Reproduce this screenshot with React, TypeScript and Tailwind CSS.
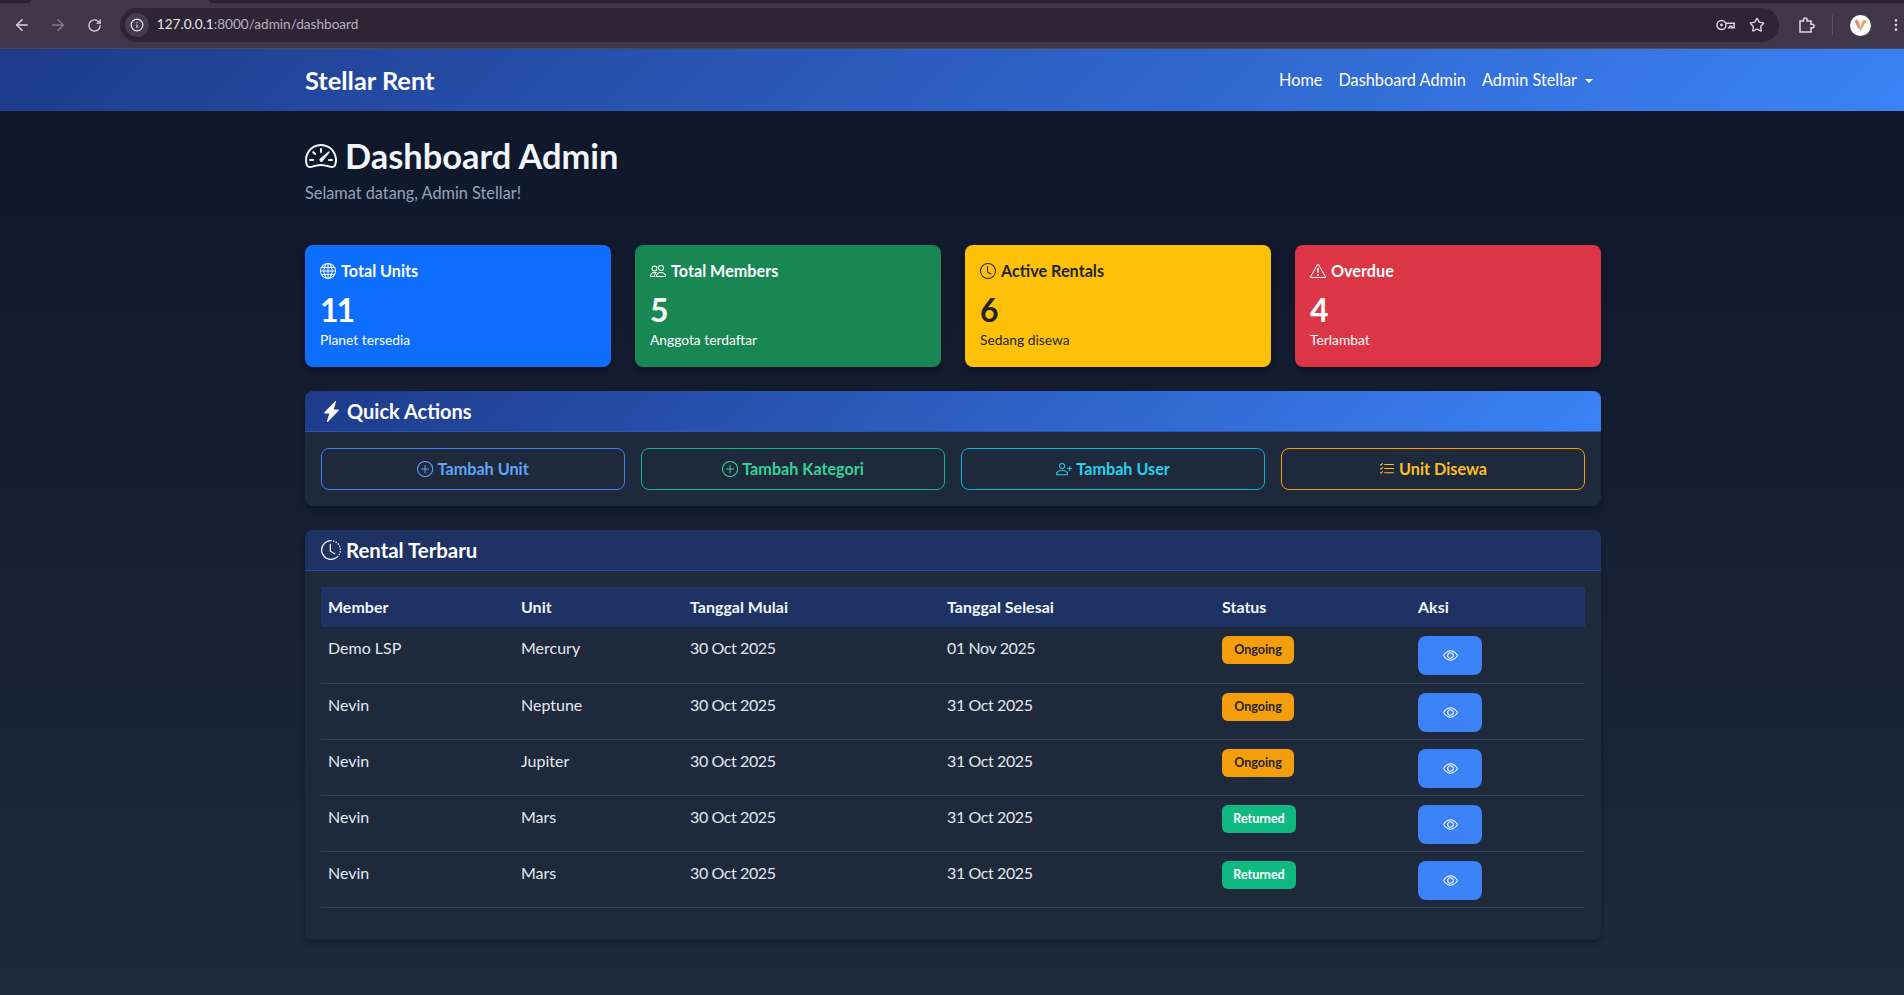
import { ArrowLeft, ArrowRight, RotateCw, Info, Star, EllipsisVertical } from "lucide-react";
import {
  BsSpeedometer2, BsGlobe, BsPeople, BsClock, BsExclamationTriangle, BsLightningChargeFill,
  BsPlusCircle, BsPersonPlus, BsListCheck, BsClockHistory, BsEye,
} from "react-icons/bs";
import type { ReactNode } from "react";

function Stat({ bg, dark, icon, title, value, sub }: { bg: string; dark?: boolean; icon: ReactNode; title: string; value: string; sub: string }) {
  return (
    <div className={`${bg} ${dark ? "text-[#212529]" : "text-white"} h-[122px] rounded-lg px-[15px] pt-[14px] shadow-[0_4px_6px_rgba(0,0,0,0.3)]`}>
      <div className="flex items-center gap-[5px] text-[16.2px] font-bold leading-6">
        <span className="text-base">{icon}</span>
        {title}
      </div>
      <div className="mt-2 text-[32px] font-bold leading-[38px] tracking-[-2px]">{value}</div>
      <div className="mt-[1px] text-[13.8px] leading-5">{sub}</div>
    </div>
  );
}

function QuickBtn({ cls, icon, label }: { cls: string; icon: ReactNode; label: string }) {
  return (
    <button className={`${cls} flex h-[42px] items-center justify-center gap-1 rounded-lg border text-[16.2px] font-bold`}>
      {icon}
      {label}
    </button>
  );
}

const rows = [
  ["Demo LSP", "Mercury", "30 Oct 2025", "01 Nov 2025", "Ongoing"],
  ["Nevin", "Neptune", "30 Oct 2025", "31 Oct 2025", "Ongoing"],
  ["Nevin", "Jupiter", "30 Oct 2025", "31 Oct 2025", "Ongoing"],
  ["Nevin", "Mars", "30 Oct 2025", "31 Oct 2025", "Returned"],
  ["Nevin", "Mars", "30 Oct 2025", "31 Oct 2025", "Returned"],
];

export default function App() {
  return (
    <div className="flex h-[995px] flex-col overflow-hidden bg-[#1e293b] font-['Lato','Liberation_Sans',sans-serif]">
      <div className="flex h-[3px] bg-[#2a2231]">
        <div className="ml-[30px] h-[3px] w-[180px] rounded-t bg-[#3f3649]" />
      </div>
      <div className="flex h-[46px] items-center border-b border-[#4a4a52] bg-[#3f3649] pb-[1px]">
        <div className="flex w-[120px] items-center pl-[13px] text-[#d8d4dc]">
          <ArrowLeft size={18} />
          <ArrowRight size={18} className="ml-[18px] text-[#7f7a87]" />
          <RotateCw size={15} className="ml-[20px]" />
        </div>
        <div className="flex h-[34px] w-[1662px] items-center justify-between rounded-full bg-[#2d2535] pl-[5px] pr-[14px]">
          <div className="flex items-center gap-[8px] text-[13.6px] text-[#e8e6ea]">
            <span className="flex h-[24px] w-[24px] items-center justify-center rounded-full bg-[#453d4f]">
              <Info size={14} />
            </span>
            <span className="mt-[-2px]">
              127.0.0.1<span className="text-[#b6b1bc]">:8000/admin/dashboard</span>
            </span>
          </div>
          <div className="flex items-center gap-[14px] text-[#d8d4dc]">
            <svg width="19" height="12" viewBox="0 0 19 12" fill="none" stroke="currentColor" strokeWidth="1.5">
              <circle cx="5.5" cy="6" r="4.5" />
              <circle cx="5.5" cy="6" r="1.4" fill="currentColor" stroke="none" />
              <path d="M10 4.2h8.2v4.6h-2.4V7.2h-2v1.6h-2" />
            </svg>
            <Star size={16} />
          </div>
        </div>
        <div className="flex flex-1 items-center pl-[19px] text-[#d8d4dc]">
          <svg width="17" height="17" viewBox="0 0 17 17" fill="none" stroke="currentColor" strokeWidth="1.6">
            <path d="M2 4h3.5V2.8a1.8 1.8 0 0 1 3.6 0V4H13v3.2h1.2a1.8 1.8 0 0 1 0 3.6H13V15H2v-3a0 0 0 0 0 0 0z" />
          </svg>
          <span className="ml-[17px] h-[20px] w-px bg-[#5a5363]" />
          <svg width="21" height="21" viewBox="0 0 21 21" className="ml-[17px]">
            <circle cx="10.5" cy="10.5" r="10.5" fill="#fff" />
            <path d="M4.5 5.5l3.2-.8 2.6 6-1.6 4z" fill="#ef8a6a" />
            <path d="M16.5 5.5l-3.2-.8-3 7 1.2 3z" fill="#f0a24a" />
            <path d="M7.6 9.5l2.9 7 2.9-7-2.9 3.5z" fill="#7fcfa8" />
          </svg>
          <EllipsisVertical size={16} className="ml-[17px]" />
        </div>
      </div>

      <nav className="h-[62px] bg-[linear-gradient(135deg,#1e3a8a,#3b82f6)]">
        <div className="ml-[293px] flex h-full w-[1320px] items-center justify-between px-3 text-white">
          <span className="text-[25.4px] font-bold">Stellar Rent</span>
          <div className="flex items-center gap-4 pr-2 text-[16.3px]">
            <span>Home</span>
            <span>Dashboard Admin</span>
            <span className="flex items-center gap-2">
              Admin Stellar
              <span className="mt-[1px] h-0 w-0 border-x-[4.8px] border-t-[4.8px] border-x-transparent border-t-white" />
            </span>
          </div>
        </div>
      </nav>

      <main className="flex-1 bg-[linear-gradient(180deg,#0f172a,#1e293b)]">
        <div className="ml-[293px] w-[1320px] px-3 pt-[23px]">
          <h1 className="flex items-center gap-2 text-[34.4px] font-bold leading-[44px] text-[#f1f5f9]">
            <BsSpeedometer2 className="text-[32px]" />
            Dashboard Admin
          </h1>
          <p className="mt-[3px] text-[16.3px] text-[#94a3b8]">Selamat datang, Admin Stellar!</p>

          <div className="mt-[40px] grid grid-cols-4 gap-6">
            <Stat bg="bg-[#0d6efd]" icon={<BsGlobe />} title="Total Units" value="11" sub="Planet tersedia" />
            <Stat bg="bg-[#198754]" icon={<BsPeople />} title="Total Members" value="5" sub="Anggota terdaftar" />
            <Stat bg="bg-[#ffc107]" dark icon={<BsClock />} title="Active Rentals" value="6" sub="Sedang disewa" />
            <Stat bg="bg-[#dc3545]" icon={<BsExclamationTriangle />} title="Overdue" value="4" sub="Terlambat" />
          </div>

          <section className="mt-6 rounded-lg bg-[#1e293b] shadow-[0_4px_6px_rgba(0,0,0,0.3)]">
            <div className="flex h-[41px] items-center gap-[5px] rounded-t-lg border-b border-[#2d55b0] bg-[linear-gradient(135deg,#1e3a8a,#3b82f6)] px-4 text-[20px] font-bold text-white">
              <BsLightningChargeFill className="text-[21px]" />
              Quick Actions
            </div>
            <div className="grid grid-cols-4 gap-4 p-4">
              <QuickBtn cls="border-[#3b82f6] text-[#60a5fa]" icon={<BsPlusCircle />} label="Tambah Unit" />
              <QuickBtn cls="border-[#10b981] text-[#34d399]" icon={<BsPlusCircle />} label="Tambah Kategori" />
              <QuickBtn cls="border-[#06b6d4] text-[#22d3ee]" icon={<BsPersonPlus />} label="Tambah User" />
              <QuickBtn cls="border-[#f59e0b] text-[#fbbf24]" icon={<BsListCheck />} label="Unit Disewa" />
            </div>
          </section>

          <section className="mt-6 h-[410px] rounded-lg bg-[#1e293b] shadow-[0_4px_6px_rgba(0,0,0,0.3)]">
            <div className="flex h-[41px] items-center gap-[5px] rounded-t-lg border-b border-[#1e4aa8] bg-[#1e3264] px-4 text-[20.4px] font-bold text-white">
              <BsClockHistory className="text-[20px]" />
              Rental Terbaru
            </div>
            <div className="p-4">
              <table className="w-full table-fixed border-collapse text-base text-[#e2e8f0]">
                <thead>
                  <tr className="h-[40px] bg-[#1e3264] text-left text-[#f1f5f9]">
                    <th className="w-[193px] pl-[7px] font-bold">Member</th>
                    <th className="w-[169px] pl-[7px] font-bold">Unit</th>
                    <th className="w-[257px] pl-[7px] font-bold">Tanggal Mulai</th>
                    <th className="w-[275px] pl-[7px] font-bold">Tanggal Selesai</th>
                    <th className="w-[196px] pl-[7px] font-bold">Status</th>
                    <th className="pl-[7px] font-bold">Aksi</th>
                  </tr>
                </thead>
                <tbody>
                  {rows.map((r, i) => (
                    <tr key={i} className="h-[56px] border-b border-[#334155] align-top">
                      {r.slice(0, 4).map((c, j) => (
                        <td key={j} className={`pl-[7px] pt-[9px] ${j >= 2 ? "tracking-[-0.4px]" : ""}`}>{c}</td>
                      ))}
                      <td className="pl-[7px] pt-[9px]">
                        <span className={`inline-block rounded-md py-[6px] text-center text-[12.5px] font-bold leading-[16px] ${r[4] === "Ongoing" ? "w-[72px] bg-[#f59e0b] text-[#212529]" : "w-[74px] bg-[#10b981] text-white"}`}>{r[4]}</span>
                      </td>
                      <td className="pl-[7px] pt-[9px]">
                        <span className="flex h-[39px] w-[64px] items-center justify-center rounded-lg bg-[#3b82f6] text-white">
                          <BsEye className="text-[15px]" />
                        </span>
                      </td>
                    </tr>
                  ))}
                </tbody>
              </table>
            </div>
          </section>
        </div>
      </main>
    </div>
  );
}
